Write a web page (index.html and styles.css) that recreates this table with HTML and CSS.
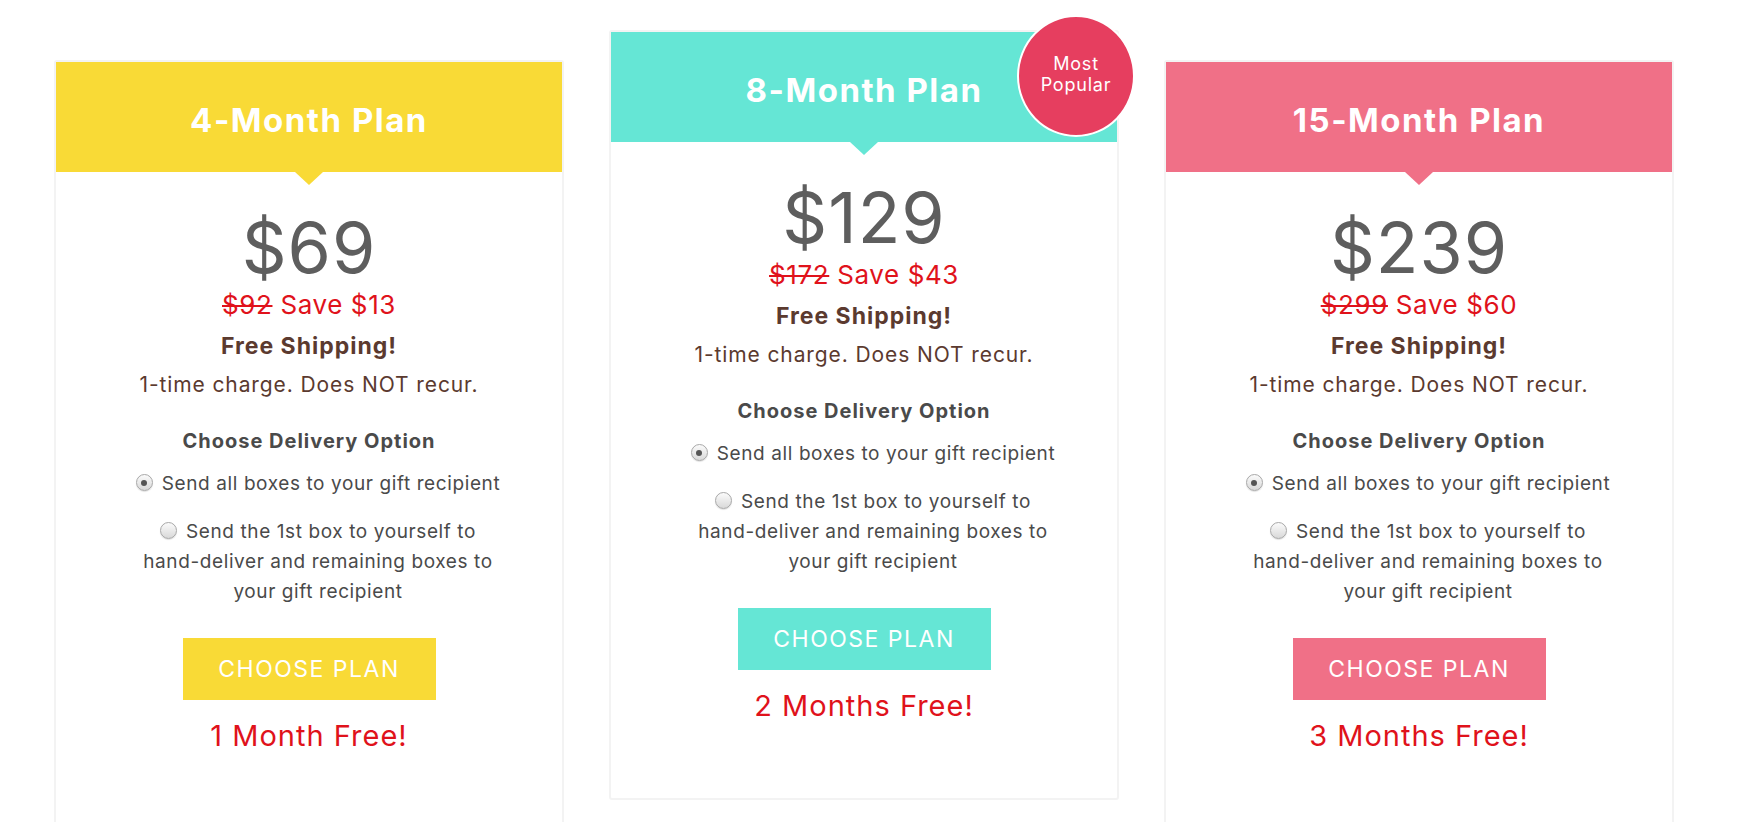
FILE: index.html
```html
<!DOCTYPE html>
<html lang="en">
<head>
<meta charset="utf-8">
<title>Gift Plans</title>
<link rel="stylesheet" href="styles.css">
</head>
<body>
<main class="plans">
  <section class="card card-low">
    <header class="card-head head-yellow"><h2 class="card-title">4-Month Plan</h2></header>
    <div class="card-body">
      <div class="price">$69</div>
      <div class="save"><s>$92</s> Save $13</div>
      <div class="ship">Free Shipping!</div>
      <div class="charge">1-time charge. Does NOT recur.</div>
      <div class="delivery-title">Choose Delivery Option</div>
      <div class="options">
        <div class="option opt-first"><span class="radio checked"></span>Send all boxes to your gift recipient</div>
        <div class="option opt-second"><span class="radio"></span>Send the 1st box to yourself to <span class="nowrap">hand-deliver</span> and remaining boxes to your gift recipient</div>
      </div>
      <a class="btn btn-yellow" href="#">CHOOSE PLAN</a>
      <div class="free">1 Month Free!</div>
    </div>
  </section>

  <section class="card card-high">
    <header class="card-head head-teal"><h2 class="card-title">8-Month Plan</h2></header>
    <div class="badge"><span>Most</span><span>Popular</span></div>
    <div class="card-body">
      <div class="price">$129</div>
      <div class="save"><s>$172</s> Save $43</div>
      <div class="ship">Free Shipping!</div>
      <div class="charge">1-time charge. Does NOT recur.</div>
      <div class="delivery-title">Choose Delivery Option</div>
      <div class="options">
        <div class="option opt-first"><span class="radio checked"></span>Send all boxes to your gift recipient</div>
        <div class="option opt-second"><span class="radio"></span>Send the 1st box to yourself to <span class="nowrap">hand-deliver</span> and remaining boxes to your gift recipient</div>
      </div>
      <a class="btn btn-teal" href="#">CHOOSE PLAN</a>
      <div class="free">2 Months Free!</div>
    </div>
  </section>

  <section class="card card-low">
    <header class="card-head head-pink"><h2 class="card-title">15-Month Plan</h2></header>
    <div class="card-body">
      <div class="price">$239</div>
      <div class="save"><s>$299</s> Save $60</div>
      <div class="ship">Free Shipping!</div>
      <div class="charge">1-time charge. Does NOT recur.</div>
      <div class="delivery-title">Choose Delivery Option</div>
      <div class="options">
        <div class="option opt-first"><span class="radio checked"></span>Send all boxes to your gift recipient</div>
        <div class="option opt-second"><span class="radio"></span>Send the 1st box to yourself to <span class="nowrap">hand-deliver</span> and remaining boxes to your gift recipient</div>
      </div>
      <a class="btn btn-pink" href="#">CHOOSE PLAN</a>
      <div class="free">3 Months Free!</div>
    </div>
  </section>
</main>
</body>
</html>
```

FILE: styles.css
```css
html, body {
  margin: 0;
  padding: 0;
  background: #ffffff;
  overflow: hidden;
}

body {
  font-family: Inter, "DejaVu Sans", sans-serif;
  color: #4a4a4a;
}

.plans {
  display: grid;
  grid-template-columns: repeat(3, 510px);
  column-gap: 45px;
  align-items: start;
  padding: 30px 0 0 54px;
}

.card {
  position: relative;
  height: 770px;
  box-sizing: border-box;
  border: 2px solid #f3f3f3;
  border-radius: 3px;
  background: #ffffff;
  text-align: center;
}

.card-low {
  margin-top: 30px;
}

.card-head {
  position: relative;
  height: 110px;
  display: flex;
  align-items: center;
  justify-content: center;
  padding-top: 6px;
  box-sizing: border-box;
}

.card-head::after {
  content: "";
  position: absolute;
  left: 50%;
  bottom: -13px;
  margin-left: -14px;
  border-left: 14px solid transparent;
  border-right: 14px solid transparent;
  border-top: 13px solid currentColor;
}

.head-yellow { background: #f9da36; color: #f9da36; }
.head-teal { background: #65e6d5; color: #65e6d5; }
.head-pink { background: #f07087; color: #f07087; }

.card-title {
  margin: 0;
  color: #ffffff;
  font-size: 33px;
  font-weight: 700;
  letter-spacing: 1.5px;
  line-height: 40px;
}

.badge {
  position: absolute;
  left: 406px;
  top: -17px;
  width: 114px;
  height: 114px;
  border: 2px solid #ffffff;
  border-radius: 50%;
  background: #e63e5f;
  color: #ffffff;
  display: flex;
  flex-direction: column;
  align-items: center;
  justify-content: center;
  font-size: 18px;
  letter-spacing: 0.8px;
  line-height: 21px;
  padding-bottom: 4px;
  box-sizing: content-box;
}

.card-body {
  display: flex;
  flex-direction: column;
  align-items: center;
}

.price {
  margin-top: 40px;
  font-size: 70px;
  line-height: 72px;
  color: #5e5e5e;
  letter-spacing: 1px;
}

.save {
  margin-top: 3px;
  font-size: 26px;
  line-height: 36px;
  color: #e0121b;
  letter-spacing: 0.6px;
}

.save s {
  text-decoration-thickness: 2px;
}

.ship {
  margin-top: 5px;
  font-size: 23px;
  font-weight: 700;
  line-height: 36px;
  color: #5b3a2f;
  letter-spacing: 1px;
}

.charge {
  margin-top: 3px;
  font-size: 21px;
  line-height: 36px;
  color: #5b3a2f;
  letter-spacing: 0.9px;
}

.delivery-title {
  margin-top: 23px;
  font-size: 20px;
  font-weight: 700;
  line-height: 30px;
  color: #4a4a4a;
  letter-spacing: 1px;
}

.options {
  width: 372px;
  margin-top: 13px;
  margin-left: 18px;
  font-size: 19px;
  line-height: 30px;
  color: #4a4a4a;
  letter-spacing: 0.6px;
}

.nowrap {
  white-space: nowrap;
}

.opt-second {
  margin-top: 18px;
}

.radio {
  display: inline-block;
  width: 15px;
  height: 15px;
  margin-right: 9px;
  vertical-align: -1px;
  border: 1px solid #a8a8a8;
  border-radius: 50%;
  background: linear-gradient(#fbfbfb, #d9d9d9);
  box-shadow: 0 1px 1px rgba(0, 0, 0, 0.12);
  position: relative;
}

.radio.checked::after {
  content: "";
  position: absolute;
  left: 4.5px;
  top: 4.5px;
  width: 6px;
  height: 6px;
  border-radius: 50%;
  background: #555555;
}

.btn {
  display: flex;
  align-items: center;
  justify-content: center;
  width: 253px;
  height: 62px;
  margin-top: 31px;
  color: #ffffff;
  font-size: 23px;
  letter-spacing: 1.5px;
  text-decoration: none;
}

.btn-yellow { background: #f9da36; }
.btn-teal { background: #65e6d5; }
.btn-pink { background: #f07087; }

.free {
  margin-top: 16px;
  font-size: 29px;
  line-height: 40px;
  color: #e0121b;
  letter-spacing: 1px;
}
```
